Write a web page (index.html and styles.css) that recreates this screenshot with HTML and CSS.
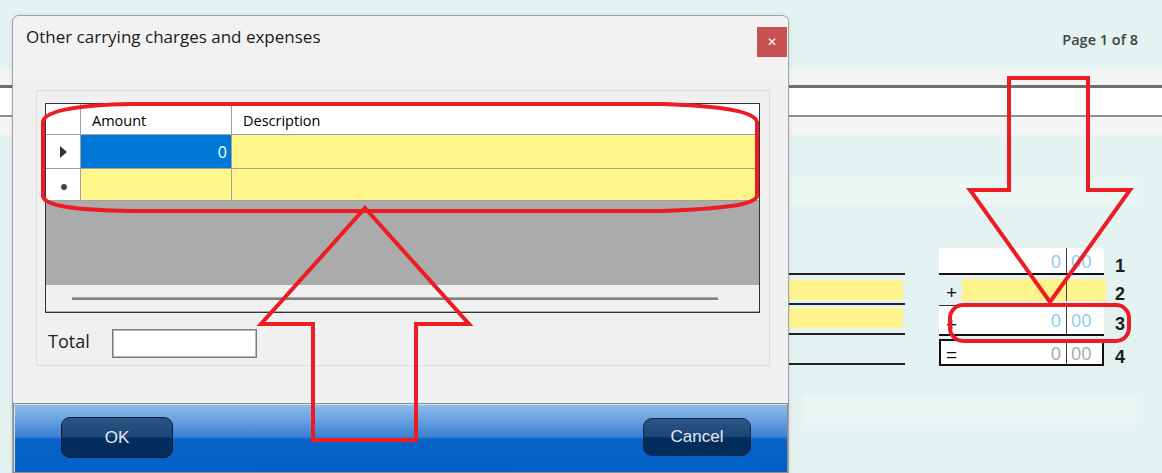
FILE: index.html
```html
<!DOCTYPE html>
<html lang="en">
<head>
  <meta charset="UTF-8">
  <meta name="viewport" content="width=device-width, initial-scale=1.0">
  <title>Other carrying charges and expenses</title>
  <link rel="stylesheet" href="styles.css">
</head>
<body>
  <div class="sheet">
    <div class="sheet_top">
      <span class="page_no">Page 1 of 8</span>
    </div>
    <div class="rules">
      <div class="rule_box"></div>
    </div>

    <div class="calc">
      <div class="calc_band"></div>
      <div class="calc_body">
        <div class="calc_left">
          <div class="cl_row"></div>
          <div class="cl_row"><div class="cl_fill"></div></div>
          <div class="cl_row"><div class="cl_fill fill_b"></div></div>
          <div class="cl_row"></div>
        </div>
        <div class="calc_right">
          <div class="amt_row">
            <div class="amt amt_1">
              <span class="sign"></span>
              <span class="dollars">0</span>
              <span class="cents">00</span>
            </div>
            <span class="line_no">1</span>
          </div>
          <div class="amt_row">
            <div class="amt amt_2">
              <span class="sign">+</span>
              <div class="amt_fill">
                <span class="dollars"></span>
                <span class="cents"></span>
              </div>
            </div>
            <span class="line_no">2</span>
          </div>
          <div class="amt_row">
            <div class="amt amt_3">
              <span class="sign">+</span>
              <span class="dollars">0</span>
              <span class="cents">00</span>
            </div>
            <span class="line_no">3</span>
          </div>
          <div class="amt_row row_total">
            <div class="amt amt_4">
              <span class="sign">=</span>
              <span class="dollars">0</span>
              <span class="cents">00</span>
            </div>
            <span class="line_no">4</span>
          </div>
        </div>
      </div>
      <div class="calc_band band_low"></div>
    </div>

    <!-- dialog over the form -->
    <div class="dialog">
      <div class="dlg_title">
        <span class="dlg_caption">Other carrying charges and expenses</span>
        <button class="dlg_close">&#x2715;</button>
      </div>

      <div class="dlg_panel">
        <div class="grid">
          <div class="g_row g_head">
            <div class="g_rh"></div>
            <div class="g_cell c_amount">Amount</div>
            <div class="g_cell c_desc">Description</div>
          </div>
          <div class="g_row g_r1">
            <div class="g_rh"><span class="cur_arrow"></span></div>
            <div class="g_cell c_amount selected">0</div>
            <div class="g_cell c_desc yellow"></div>
          </div>
          <div class="g_row g_r2">
            <div class="g_rh"><span class="new_dot"></span></div>
            <div class="g_cell c_amount yellow"></div>
            <div class="g_cell c_desc yellow"></div>
          </div>
          <div class="g_empty"></div>
          <div class="g_scroll"><div class="g_thumb"></div></div>
        </div>

        <div class="total_row">
          <span class="total_label">Total</span>
          <input class="total_box" type="text" value="">
        </div>
      </div>

      <div class="dlg_buttons">
        <button class="btn btn_ok">OK</button>
        <button class="btn btn_cancel">Cancel</button>
      </div>
    </div>

    <!-- red hand drawn marks -->
    <svg class="marks" width="1162" height="473" viewBox="0 0 1162 473">
      <g fill="none" stroke="#ed1c24" stroke-width="4" stroke-linejoin="miter">
        <path d="M133 104 L663 104 C720 106 755 111 757 122 L757 196 C755 205 720 209 663 211 L130 211 C70 210 44 205 43 196 L43 122 C44 112 70 105 133 104 Z"/>
        <polygon points="365,208 469,324 416,324 416,440 313,440 313,324 261,324"/>
        <polygon points="1009,78 1088,78 1088,190 1130,190 1050,302 970,190 1009,190"/>
        <rect x="950" y="305" width="179" height="36" rx="13"/>
      </g>
    </svg>
  </div>
</body>
</html>
```

FILE: styles.css
```css
*{
  margin: 0;
  padding: 0;
  box-sizing: border-box;
}

body{
  width: 1162px;
  height: 473px;
  overflow: hidden;
  font-family: "Liberation Sans", Arial, sans-serif;
}

.sheet{
  position: relative;
  width: 1162px;
  height: 473px;
  background-color: #e4f2f2;
  overflow: hidden;
}

/* background form */

.sheet_top{
  height: 68px;
  display: flex;
  justify-content: flex-end;
  padding: 31px 24px 0 0;
}

.page_no{
  font-family: "Open Sans", "Noto Sans", sans-serif;
  font-size: 14.5px;
  font-weight: 600;
  color: #3c4248;
  line-height: 18px;
}

.rules{
  height: 67px;
  padding-top: 17px;
  background-color: #f3f5f5;
}

.rule_box{
  height: 32px;
  background-color: #fff;
  border-top: 3px solid #6f6f6f;
  border-bottom: 2px solid #8f8f8f;
}

.calc{
  padding: 41px 0 0 787px;
}

.calc_band{
  width: 350px;
  height: 30px;
  background-color: #eaf6f3;
}

.calc_band.band_low{
  width: 334px;
  margin: 28px 0 0 16px;
}

.calc_body{
  display: flex;
  margin-top: 42px;
}

.calc_left{
  width: 118px;
  margin-right: 34px;
}

.cl_row{
  height: 30px;
  border-bottom: 2px solid #222;
  padding-top: 5px;
}

.cl_row:first-child{
  height: 27px;
}

.cl_fill{
  width: 116px;
  height: 20px;
  background-color: #fff48c;
}

.cl_fill.fill_b{
  margin-top: -2px;
}

.calc_right{
  display: flex;
  flex-direction: column;
}

.amt_row{
  display: flex;
}

.amt{
  display: flex;
  width: 165px;
  background-color: #fff;
  font-family: "Open Sans", "Noto Sans", sans-serif;
  font-size: 18px;
  color: #8fc7ef;
}

.sign{
  width: 23px;
  padding: 0 0 0 7px;
  color: #111;
  font-family: "Liberation Sans", Arial, sans-serif;
  font-size: 19px;
  display: flex;
  align-items: flex-end;
  line-height: 18px;
}

.dollars{
  flex: 1;
  text-align: right;
  padding-right: 5px;
  display: flex;
  align-items: center;
  justify-content: flex-end;
}

.cents{
  width: 38px;
  border-left: 1px solid #3a3a3a;
  padding-left: 4px;
  display: flex;
  align-items: center;
}

.amt_1{
  height: 27px;
  border-bottom: 2px solid #111;
}

.amt_2{
  height: 30px;
  border-bottom: 1px solid #333;
  background: transparent;
}

.amt_2 .sign{
  padding-bottom: 3px;
}

.amt_fill{
  flex: 1;
  display: flex;
  margin: 3px -2px 4px 0;
  background-color: #fff48c;
}

.amt_fill .dollars{
  padding-right: 5px;
}

.amt_fill .cents{
  width: 40px;
}

.amt_3{
  height: 30px;
  border-bottom: 2px solid #111;
}

.amt_3 .sign{
  padding-bottom: 0;
}

.row_total{
  margin-top: 3px;
}

.amt_4{
  height: 27px;
  border: 2px solid #111;
  color: #a6a6a6;
}

.amt_4 .sign{
  padding-left: 5px;
  padding-bottom: 0;
}

.amt_4 .cents{
  width: 36px;
}

.line_no{
  width: 30px;
  padding: 8px 0 0 11px;
  font-size: 18px;
  font-weight: bold;
  color: #1c1c1c;
  line-height: 20px;
}

/* dialog */

.dialog{
  position: absolute;
  left: 12px;
  top: 15px;
  width: 777px;
  height: 470px;
  background-color: #f0f0f0;
  border: 1px solid #a2a2a2;
  border-radius: 7px 7px 0 0;
  box-shadow: 0 0 4px rgba(0,0,0,0.12);
}

.dlg_title{
  height: 60px;
  display: flex;
  justify-content: space-between;
  align-items: flex-start;
  padding: 11px 1px 0 13px;
  background-color: #f2f2f2;
  border-radius: 7px 7px 0 0;
}

.dlg_caption{
  font-family: "Open Sans", "Noto Sans", sans-serif;
  font-size: 17px;
  color: #1a1a1a;
  line-height: 22px;
  margin-top: -1px;
}

.dlg_close{
  width: 30px;
  height: 30px;
  border: none;
  background-color: #c75050;
  color: #fff;
  font-size: 12px;
  font-weight: bold;
  font-family: "DejaVu Sans", sans-serif;
  display: flex;
  justify-content: center;
  align-items: center;
}

.dlg_panel{
  width: 734px;
  height: 276px;
  margin: 14px 0 0 23px;
  border: 1px solid #dcdcdc;
  padding: 12px 8px 0 8px;
}

.grid{
  width: 715px;
  height: 210px;
  border: 1px solid #333;
  background-color: #ababab;
  font-family: "Open Sans", "Noto Sans", sans-serif;
  font-size: 14.5px;
  color: #000;
}

.g_row{
  display: flex;
  border-bottom: 1px solid #a0a0a0;
}

.g_head{
  height: 31px;
  background-color: #fff;
}

.g_r1{
  height: 34px;
}

.g_r2{
  height: 32px;
}

.g_rh{
  width: 35px;
  background-color: #fff;
  border-right: 1px solid #a0a0a0;
  display: flex;
  justify-content: center;
  align-items: center;
}

.g_cell{
  display: flex;
  align-items: center;
  padding: 0 11px;
}

.g_head .g_cell{
  align-items: flex-start;
  padding-top: 7px;
}

.c_amount{
  width: 151px;
  border-right: 1px solid #a0a0a0;
}

.c_desc{
  flex: 1;
}

.yellow{
  background-color: #fff58a;
}

.selected{
  background-color: #0078d7;
  color: #fff;
  justify-content: flex-end;
  padding-right: 4px;
  font-size: 16px;
}

.cur_arrow{
  width: 0;
  height: 0;
  margin-left: 1px;
  border-left: 7px solid #333;
  border-top: 6px solid transparent;
  border-bottom: 6px solid transparent;
}

.new_dot{
  width: 6px;
  height: 6px;
  margin: 4px 0 0 2px;
  border-radius: 50%;
  background-color: #444;
}

.g_empty{
  height: 84px;
}

.g_scroll{
  height: 26px;
  background-color: #f0f0f0;
  padding: 12px 0 0 26px;
}

.g_thumb{
  width: 646px;
  height: 3px;
  background-color: #808080;
  border-top: 1px solid #a8a8a8;
}

.total_row{
  display: flex;
  align-items: flex-start;
  margin-top: 16px;
  padding-left: 3px;
}

.total_label{
  width: 64px;
  font-family: "Open Sans", "Noto Sans", sans-serif;
  font-size: 18px;
  color: #222;
  line-height: 22px;
  padding-top: 1px;
}

.total_box{
  width: 145px;
  height: 29px;
  border: 1px solid #7a7a7a;
  box-shadow: inset 0 0 0 1px #b9b9b9;
  background-color: #fff;
}

.dlg_buttons{
  display: flex;
  justify-content: space-between;
  align-items: flex-start;
  height: 70px;
  margin: 37px 0 0 0;
  padding: 13px 36px 0 47px;
  border: 1px solid #8e8e8e;
  box-shadow: inset 1px 1px 0 #cfe3f7;
  background: linear-gradient(#93bdea 0, #74a8e3 12px, #4d8dd9 26px, #3a82d4 33px, #0a63c8 35px, #0060c8 100%);
}

.btn{
  height: 41px;
  border: 1px solid #0a1c36;
  border-radius: 9px;
  color: #e3eaf3;
  font-family: "Liberation Sans", Arial, sans-serif;
  font-size: 17px;
  background: linear-gradient(#2b5585 0%, #1d4677 48%, #042d5f 52%, #052b5a 100%);
}

.btn_ok{
  width: 112px;
}

.btn_cancel{
  width: 108px;
  height: 38px;
  margin-top: 1px;
  border-color: #10284a;
}

.marks{
  position: absolute;
  left: 0;
  top: 0;
  pointer-events: none;
}
```
